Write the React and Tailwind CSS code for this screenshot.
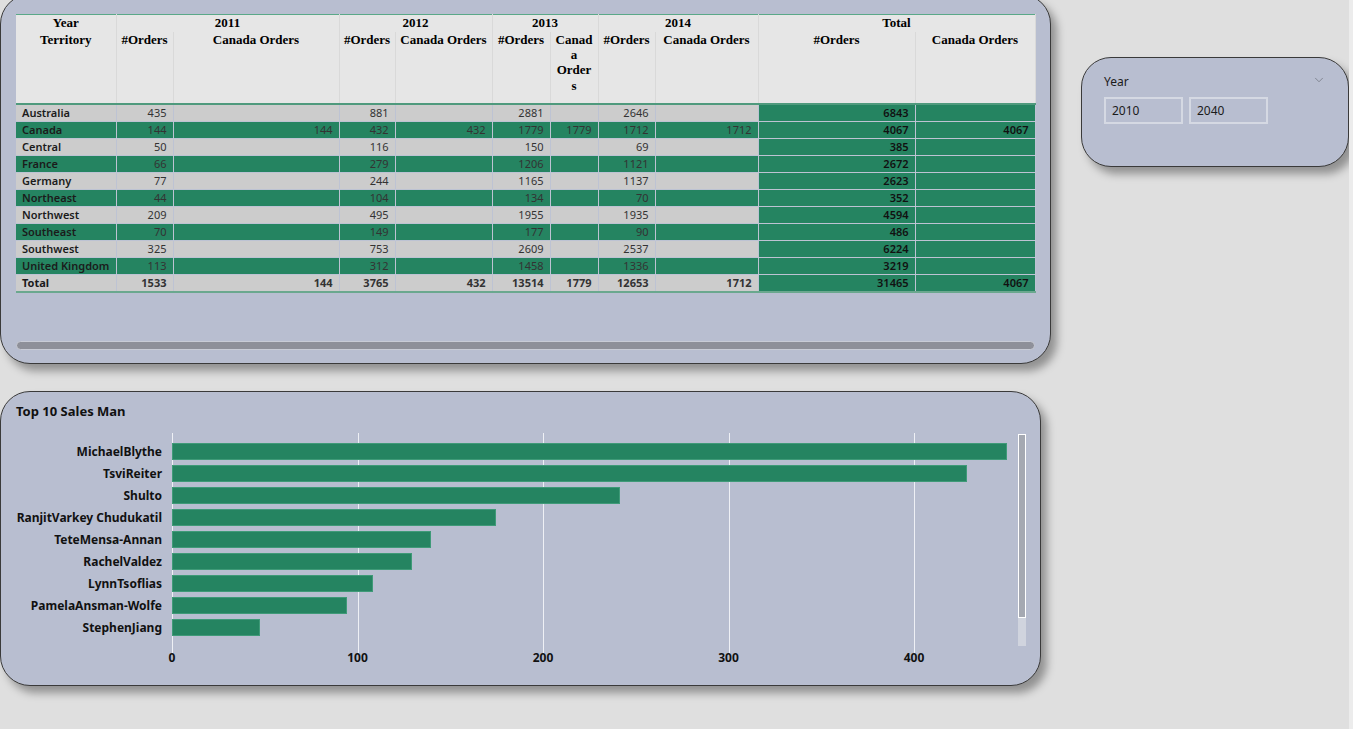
import React from 'react';
import { ChevronDown } from 'lucide-react';

const years = ['2011', '2012', '2013', '2014', 'Total'];

const colWidths = [
  'w-[100px]', 'w-[57px]', 'w-[166px]', 'w-[56px]', 'w-[97px]', 'w-[58px]',
  'w-[48px]', 'w-[57px]', 'w-[103px]', 'w-[157px]', 'w-[120px]',
];

const rows = [
  ['Australia', 435, '', 881, '', 2881, '', 2646, '', 6843, ''],
  ['Canada', 144, 144, 432, 432, 1779, 1779, 1712, 1712, 4067, 4067],
  ['Central', 50, '', 116, '', 150, '', 69, '', 385, ''],
  ['France', 66, '', 279, '', 1206, '', 1121, '', 2672, ''],
  ['Germany', 77, '', 244, '', 1165, '', 1137, '', 2623, ''],
  ['Northeast', 44, '', 104, '', 134, '', 70, '', 352, ''],
  ['Northwest', 209, '', 495, '', 1955, '', 1935, '', 4594, ''],
  ['Southeast', 70, '', 149, '', 177, '', 90, '', 486, ''],
  ['Southwest', 325, '', 753, '', 2609, '', 2537, '', 6224, ''],
  ['United Kingdom', 113, '', 312, '', 1458, '', 1336, '', 3219, ''],
];
const totalRow = ['Total', 1533, 144, 3765, 432, 13514, 1779, 12653, 1712, 31465, 4067];

const sales = [
  ['MichaelBlythe', 450],
  ['TsviReiter', 428.6],
  ['Shulto', 241.5],
  ['RanjitVarkey Chudukatil', 174.7],
  ['TeteMensa-Annan', 139.6],
  ['RachelValdez', 129.4],
  ['LynnTsoflias', 108.4],
  ['PamelaAnsman-Wolfe', 94.3],
  ['StephenJiang', 47.4],
];
const PX_PER_UNIT = 1.855;
const ticks = [0, 100, 200, 300, 400];

const serif = "font-['Liberation_Serif',serif]";

const MatrixTable = () => {
  const renderRow = (row, i, isTotal) => {
    const green = !isTotal && i % 2 === 1;
    return (
      <tr key={row[0]} className={green ? 'bg-[#258461]' : 'bg-[#cccccc]'}>
        {row.map((v, c) => {
          const totalCol = c >= 9;
          const base = 'h-[17px] p-0 leading-[16px] border-b border-r border-white/[0.07] whitespace-nowrap overflow-hidden';
          if (c === 0) {
            return (
              <td key={c} className={`${base} text-left pl-[6px] text-[#1b1b1b] ${isTotal ? 'font-bold' : 'font-semibold'}`}>
                {v}
              </td>
            );
          }
          return (
            <td
              key={c}
              className={`${base} text-right pr-[6px] ${totalCol ? 'bg-[#258461] font-semibold text-[#111]' : 'text-[#333]'} ${isTotal ? 'font-bold text-[#111]' : ''}`}
            >
              {v}
            </td>
          );
        })}
      </tr>
    );
  };

  return (
    <table className="table-fixed border-collapse w-[1019px] text-[11px] font-['Segoe_UI','Noto_Sans',sans-serif]">
      <colgroup>
        {colWidths.map((w, i) => (
          <col key={i} className={w} />
        ))}
      </colgroup>
      <thead className={`${serif} text-[13px] font-bold text-black bg-[#e6e6e6]`}>
        <tr className="border-t border-[#5aa888]">
          <th className="h-[17px] p-0 leading-[16px] font-bold border-r border-[#d9d9d9]">Year</th>
          {years.map((y) => (
            <th key={y} colSpan={2} className="h-[17px] p-0 leading-[16px] font-bold border-r border-[#d9d9d9]">
              {y}
            </th>
          ))}
        </tr>
        <tr className="border-b-2 border-[#4f9a7d]">
          <th className="h-[72px] p-0 align-top leading-[15px] font-bold border-r border-[#d9d9d9]">Territory</th>
          {years.map((y) => (
            <React.Fragment key={y}>
              <th className="h-[72px] p-0 align-top leading-[15px] font-bold border-r border-[#d9d9d9] whitespace-nowrap">
                #Orders
              </th>
              <th className="h-[72px] p-0 align-top leading-[15.4px] font-bold border-r border-[#d9d9d9] whitespace-nowrap">
                {y === '2013' ? (
                  <>
                    Canad<br />a<br />Order<br />s
                  </>
                ) : (
                  'Canada Orders'
                )}
              </th>
            </React.Fragment>
          ))}
        </tr>
      </thead>
      <tbody className="border-b-2 border-[#6aa88e]">
        {rows.map((r, i) => renderRow(r, i, false))}
        {renderRow(totalRow, 0, true)}
      </tbody>
    </table>
  );
};

const SalesChart = () => (
  <div className="flex items-start mt-[13px]">
    <div className="w-[171px] pr-[10px] pt-[10px] flex flex-col gap-[5px] text-right text-[12px] font-bold text-[#111]">
      {sales.map(([name]) => (
        <div key={name} className="h-[17px] leading-[17px] whitespace-nowrap">
          {name}
        </div>
      ))}
    </div>
    <div className="w-[846px] flex flex-col">
      <div className="relative h-[220px] pt-[10px] flex flex-col gap-[5px]">
        {ticks.map((t) => (
          <div
            key={t}
            className="absolute top-0 bottom-0 w-px bg-[#eef0f5]"
            style={{ left: t * PX_PER_UNIT }}
          />
        ))}
        {sales.map(([name, v]) => (
          <div
            key={name}
            className="relative h-[17px] bg-[#258461] border border-[#3f9a78]"
            style={{ width: v * PX_PER_UNIT }}
          />
        ))}
      </div>
      <div className="relative h-[16px] -mt-[3px] text-[12px] font-bold text-[#111]">
        {ticks.map((t) => (
          <span
            key={t}
            className="absolute top-0 -translate-x-1/2 leading-[16px]"
            style={{ left: t * PX_PER_UNIT }}
          >
            {t}
          </span>
        ))}
      </div>
    </div>
    <div className="w-[8px] mt-[1px] h-[212px] flex flex-col">
      <div className="h-[184px] bg-[#a5a9b2] border border-white" />
      <div className="flex-1 bg-[#d0d4de]" />
    </div>
  </div>
);

const App = () => (
  <div className="h-[729px] w-[1353px] overflow-hidden bg-[#dfdfdf] flex font-['Segoe_UI','Noto_Sans',sans-serif]">
    <div className="flex-1 flex items-start">
      <div className="flex flex-col">
        {/* Matrix panel */}
        <div className="-mt-[6px] w-[1051px] h-[370px] rounded-[30px] border border-[#3a3a3a] bg-[#b8bed0] shadow-[6px_7px_9px_rgba(0,0,0,0.35)] pt-[19px] pl-[15px] flex flex-col">
          <MatrixTable />
          <div className="mt-auto mb-[13px] w-[1019px] h-[9px] rounded-full bg-[#8e9099] border border-[#c9ccd6]" />
        </div>

        {/* Chart panel */}
        <div className="mt-[27px] w-[1041px] h-[295px] rounded-[30px] border border-[#3a3a3a] bg-[#b8bed0] shadow-[6px_7px_9px_rgba(0,0,0,0.35)] pt-[11px]">
          <div className="pl-[15px] text-[13px] font-bold text-[#111] leading-[17px]">Top 10 Sales Man</div>
          <SalesChart />
        </div>
      </div>

      {/* Year slicer */}
      <div className="ml-[30px] mt-[57px] w-[268px] h-[110px] rounded-[30px] border border-[#3a3a3a] bg-[#b8bed0] shadow-[6px_7px_9px_rgba(0,0,0,0.35)] pt-[16px] pl-[22px] pr-[22px]">
        <div className="flex items-center justify-between text-[12px] text-[#1b1b1b] leading-[16px]">
          <span>Year</span>
          <ChevronDown size={14} strokeWidth={1.2} className="text-[#6b6e78] -mt-[5px]" />
        </div>
        <div className="flex gap-[6px] mt-[7px]">
          <div className="w-[79px] h-[27px] border-2 border-[#d5d9e3] pl-[6px] text-[12px] leading-[23px] text-[#1b1b1b]">2010</div>
          <div className="w-[79px] h-[27px] border-2 border-[#d5d9e3] pl-[6px] text-[12px] leading-[23px] text-[#1b1b1b]">2040</div>
        </div>
      </div>
    </div>
    <div className="w-[5px] bg-[#ececec]" />
  </div>
);

export default App;
